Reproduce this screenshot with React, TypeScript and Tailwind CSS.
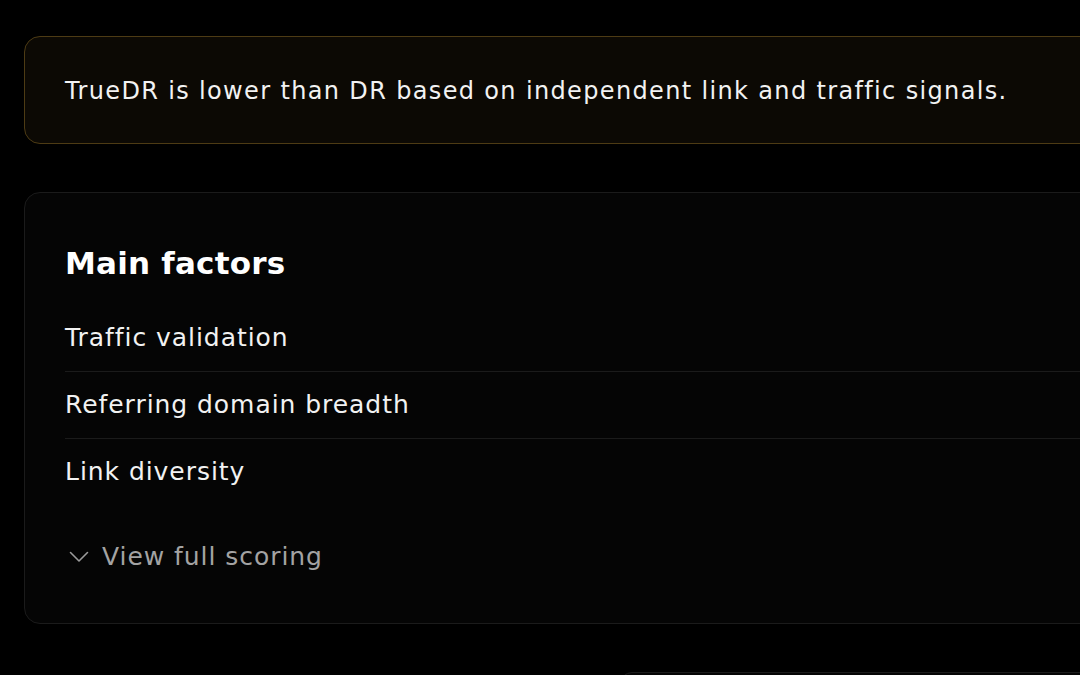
const factors = ["Traffic validation", "Referring domain breadth", "Link diversity"];

export default function App() {
  return (
    <div className="h-screen w-full overflow-hidden bg-black font-['DejaVu_Sans',sans-serif] text-[#f2f2f2]">
      <div className="flex w-[1280px] flex-col gap-12 pl-6 pt-9">
        {/* Notice */}
        <div className="rounded-2xl border border-[#4d3b14] bg-[#0c0904] px-10 pt-[40px] pb-[38px]">
          <p className="text-[24px] leading-[28px] tracking-[1.35px]">
            TrueDR is lower than DR based on independent link and traffic signals.
          </p>
        </div>

        {/* Factors card */}
        <div className="rounded-2xl border border-[#1b1b1b] bg-[#050505] px-10 pt-[50px] pb-[50px]">
          <h2 className="text-[31px] font-bold leading-[40px] tracking-[0.2px] text-white">Main factors</h2>
          <ul className="mt-[22px]">
            {factors.map((f, i) => (
              <li
                key={f}
                className={`py-[17px] text-[25px] leading-[32px] tracking-[0.95px] ${
                  i < factors.length - 1 ? "border-b border-[#1b1b1b]" : ""
                }`}
              >
                {f}
              </li>
            ))}
          </ul>
          <button className="mt-9 flex items-center gap-[13px] text-[25px] leading-[32px] tracking-[0.95px] text-[#a3a3a3]">
            <svg width="20" height="12" viewBox="0 0 20 12" fill="none" className="ml-[4px]">
              <path d="M1.5 1.5 L10 10 L18.5 1.5" stroke="#9a9a9a" strokeWidth="1.6" strokeLinecap="round" strokeLinejoin="round" />
            </svg>
            View full scoring
          </button>
        </div>

        <div className="ml-[596px] h-16 rounded-t-xl border border-[#1b1b1b] bg-[#050505]" />
      </div>
    </div>
  );
}
